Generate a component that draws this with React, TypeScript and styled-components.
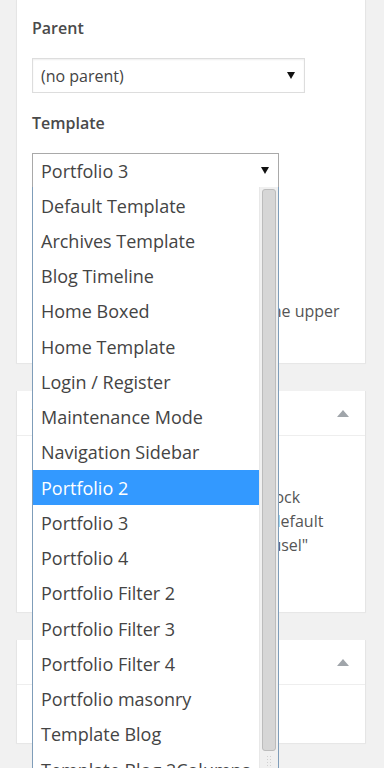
import styled, { createGlobalStyle } from 'styled-components';

const GlobalStyle = createGlobalStyle`
  html, body {
    margin: 0;
    padding: 0;
    background: #f1f1f1;
    overflow: hidden;
  }
  body {
    font-family: "Open Sans", "Liberation Sans", sans-serif;
    color: #444;
  }
`;

const Page = styled.div`
  height: 768px;
  overflow: hidden;
  padding: 0 18px 0 16px;
  display: flex;
  flex-direction: column;
  gap: 28px;
`;

const Panel = styled.div`
  flex-shrink: 0;
  background: #fff;
  border: 1px solid #e5e5e5;
  border-top: none;
  border-bottom: none;
  box-shadow: 0 1px 1px rgba(0, 0, 0, 0.04);
`;

const PanelHeader = styled.div`
  height: 44px;
  display: flex;
  align-items: center;
  justify-content: space-between;
  padding: 0 15px;
  border-bottom: 1px solid #eee;
  font-size: 15px;
  font-weight: 600;
  color: #23282d;
`;

const Collapse = styled.span`
  width: 0;
  height: 0;
  border-left: 6px solid transparent;
  border-right: 6px solid transparent;
  border-bottom: 7px solid #a0a5aa;
  margin-right: 1px;
`;

const PanelBody = styled.div<{ $pad: string }>`
  padding: ${(p) => p.$pad};
  display: flex;
  flex-direction: column;
`;

const Label = styled.div<{ $top: number }>`
  margin-top: ${(p) => p.$top}px;
  font-size: 16px;
  font-weight: 600;
  color: #4a4a4a;
  line-height: 20px;
`;

const SelectBox = styled.div<{ $width: number; $focused?: boolean; $top: number; $size: number }>`
  position: relative;
  box-sizing: border-box;
  margin-top: ${(p) => p.$top}px;
  width: ${(p) => p.$width}px;
  height: 35px;
  border: 1px solid ${(p) => (p.$focused ? '#a9a9a9' : '#ddd')};
  box-shadow: ${(p) => (p.$focused ? 'none' : 'inset 0 1px 2px rgba(0,0,0,0.07)')};
  display: flex;
  align-items: center;
  justify-content: space-between;
  padding: 0 8px;
  font-size: ${(p) => p.$size}px;
  color: #444;
  background: #fff;
`;

const Arrow = styled.span`
  width: 0;
  height: 0;
  border-left: 4px solid transparent;
  border-right: 4px solid transparent;
  border-top: 7px solid #111;
  margin-right: 1px;
`;

const Input = styled.div<{ $width: number; $top: number }>`
  box-sizing: border-box;
  margin-top: ${(p) => p.$top}px;
  width: ${(p) => p.$width}px;
  height: 30px;
  border: 1px solid #ddd;
  box-shadow: inset 0 1px 2px rgba(0, 0, 0, 0.07);
`;

const Text = styled.p<{ $top: number }>`
  margin: ${(p) => p.$top}px 0 0;
  font-size: 16px;
  line-height: 24px;
  color: #555;
  white-space: nowrap;
`;

const Dropdown = styled.div`
  position: absolute;
  top: 100%;
  left: -1px;
  width: 247px;
  box-sizing: border-box;
  border: 1px solid #7f9db9;
  border-top: none;
  background: #fff;
  display: flex;
  z-index: 10;
  padding-top: 1px;
`;

const Options = styled.div`
  flex: 1;
  display: flex;
  flex-direction: column;
`;

const Option = styled.div<{ $selected?: boolean }>`
  height: 35.25px;
  display: flex;
  align-items: center;
  padding-left: 8px;
  font-size: 18px;
  white-space: nowrap;
  overflow: hidden;
  color: ${(p) => (p.$selected ? '#fff' : '#444')};
  background: ${(p) => (p.$selected ? '#3399ff' : 'transparent')};
`;

const Track = styled.div`
  width: 19px;
  box-sizing: border-box;
  background: #f0f0f0;
  border-left: 1px solid #e8e8e8;
  padding: 2px 2px 0 2px;
  display: flex;
  flex-direction: column;
  margin-top: -1px;
`;

const Thumb = styled.div`
  height: 562px;
  box-sizing: border-box;
  background: #d6d6d6;
  border: 1px solid #bcbcbc;
  border-radius: 3px;
`;

const Grip = styled.div`
  margin: 4px auto 0;
  width: 6px;
  height: 20px;
  background-image: radial-gradient(#d0d0d0 1px, transparent 1px);
  background-size: 3px 3px;
`;

const templates = [
  'Default Template',
  'Archives Template',
  'Blog Timeline',
  'Home Boxed',
  'Home Template',
  'Login / Register',
  'Maintenance Mode',
  'Navigation Sidebar',
  'Portfolio 2',
  'Portfolio 3',
  'Portfolio 4',
  'Portfolio Filter 2',
  'Portfolio Filter 3',
  'Portfolio Filter 4',
  'Portfolio masonry',
  'Template Blog',
  'Template Blog 2Columns',
  'Template Blog 3Columns',
];

export default function App() {
  return (
    <>
      <GlobalStyle />
      <Page>
        <Panel>
          <PanelBody $pad="18px 15px 16px">
            <Label $top={0}>Parent</Label>
            <SelectBox $width={273} $top={20} $size={16}>
              (no parent)
              <Arrow />
            </SelectBox>
            <Label $top={20}>Template</Label>
            <SelectBox $width={247} $top={20} $size={18} $focused>
              Portfolio 3
              <Arrow />
              <Dropdown>
                <Options>
                  {templates.map((t) => (
                    <Option key={t} $selected={t === 'Portfolio 2'}>
                      {t}
                    </Option>
                  ))}
                </Options>
                <Track>
                  <Thumb />
                  <Grip />
                </Track>
              </Dropdown>
            </SelectBox>
            <Label $top={17}>Order</Label>
            <Input $width={80} $top={14} />
            <Text $top={30}>
              Need help? Use the Help tab in the upper
              <br />
              right of your screen.
            </Text>
          </PanelBody>
        </Panel>
        <Panel>
          <PanelHeader>
            Visual Slider
            <Collapse />
          </PanelHeader>
          <PanelBody $pad="11px 15px 31px">
            <Input $width={200} $top={0} />
            <Text $top={8}>
              Choose the slider for the page block
              <br />
              or leave these empty to use the default
              <br />
              "Homepage" option in the "Carousel"
              <br />
              for this page.
            </Text>
          </PanelBody>
        </Panel>
        <Panel>
          <PanelHeader>
            Layout
            <Collapse />
          </PanelHeader>
          <PanelBody $pad="10px 15px 24px">
            <Text $top={0}>Sidebar position</Text>
          </PanelBody>
        </Panel>
      </Page>
    </>
  );
}
